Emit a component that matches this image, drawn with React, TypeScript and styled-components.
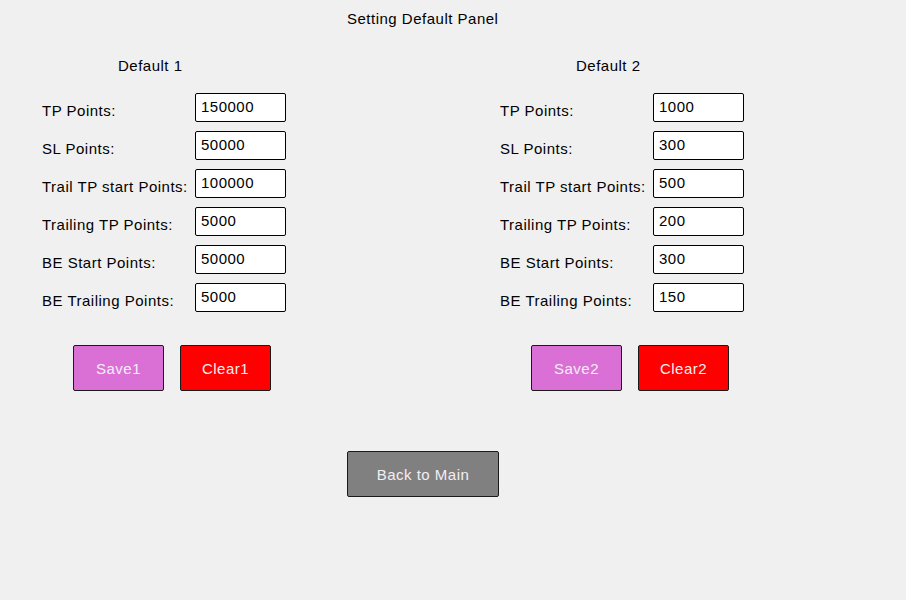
import React from "react";
import styled, { createGlobalStyle } from "styled-components";

const Global = createGlobalStyle`
  html, body { margin: 0; padding: 0; background: #f0f0f0; }
  body { font-family: "Liberation Sans", Arial, sans-serif; color: #000; letter-spacing: 0.5px; }
`;

const Page = styled.div`
  width: 906px;
  height: 600px;
  background: #f0f0f0;
  display: flex;
  flex-direction: column;
`;

const Title = styled.div`
  height: 38px;
  line-height: 38px;
  padding-left: 347px;
  font-size: 15px;
`;

const Columns = styled.div`
  display: grid;
  grid-template-columns: 244px 244px;
  column-gap: 214px;
  padding-left: 42px;
`;

const Column = styled.div`
  display: flex;
  flex-direction: column;
`;

const Heading = styled.div`
  height: 55px;
  line-height: 55px;
  padding-left: 76px;
  font-size: 15px;
`;

const Rows = styled.div`
  display: flex;
  flex-direction: column;
  gap: 9px;
`;

const Row = styled.div`
  display: flex;
  align-items: center;
  height: 29px;
`;

const Label = styled.div`
  width: 153px;
  font-size: 15px;
  padding-top: 6px;
  white-space: nowrap;
`;

const Field = styled.div`
  box-sizing: border-box;
  width: 91px;
  height: 29px;
  background: #fff;
  border: 1.5px solid #000;
  border-radius: 2px;
  padding-left: 5px;
  font-size: 15px;
  line-height: 26px;
`;

const Buttons = styled.div`
  display: flex;
  gap: 16px;
  margin-top: 33px;
  padding-left: 31px;
`;

const Button = styled.div<{ $bg: string; $w?: number }>`
  box-sizing: border-box;
  width: ${(p) => p.$w ?? 91}px;
  height: 46px;
  background: ${(p) => p.$bg};
  border: 1.5px solid #1a1a1a;
  border-radius: 2px;
  color: #f4eef4;
  font-size: 15px;
  display: flex;
  align-items: center;
  justify-content: center;
`;

const Footer = styled.div`
  padding-left: 347px;
  margin-top: 60px;
`;

type Item = [string, string];

const left: Item[] = [
  ["TP Points:", "150000"],
  ["SL Points:", "50000"],
  ["Trail TP start Points:", "100000"],
  ["Trailing TP Points:", "5000"],
  ["BE Start Points:", "50000"],
  ["BE Trailing Points:", "5000"],
];
const right: Item[] = [
  ["TP Points:", "1000"],
  ["SL Points:", "300"],
  ["Trail TP start Points:", "500"],
  ["Trailing TP Points:", "200"],
  ["BE Start Points:", "300"],
  ["BE Trailing Points:", "150"],
];

const Panel = ({ n, items }: { n: number; items: Item[] }) => (
  <Column>
    <Heading>Default {n}</Heading>
    <Rows>
      {items.map(([l, v]) => (
        <Row key={l}>
          <Label>{l}</Label>
          <Field>{v}</Field>
        </Row>
      ))}
    </Rows>
    <Buttons>
      <Button $bg="#da70d6">Save{n}</Button>
      <Button $bg="#ff0000">Clear{n}</Button>
    </Buttons>
  </Column>
);

export default function App() {
  return (
    <Page>
      <Global />
      <Title>Setting Default Panel</Title>
      <Columns>
        <Panel n={1} items={left} />
        <Panel n={2} items={right} />
      </Columns>
      <Footer>
        <Button $bg="#808080" $w={152}>
          Back to Main
        </Button>
      </Footer>
    </Page>
  );
}
